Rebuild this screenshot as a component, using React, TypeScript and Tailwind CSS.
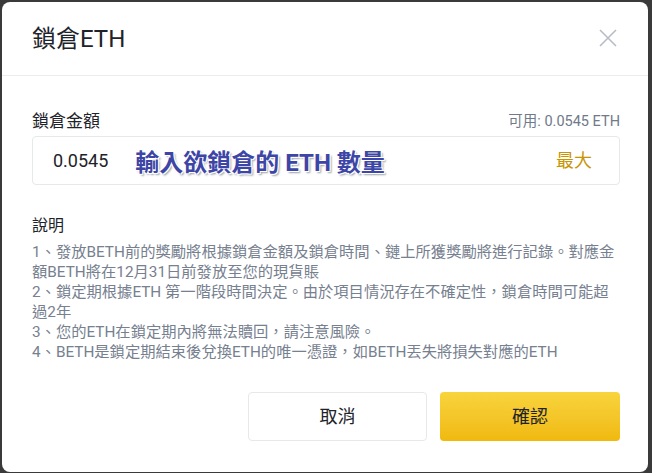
import React from "react";

export default function App() {
  const lines = [
    "1、發放BETH前的獎勵將根據鎖倉金額及鎖倉時間、鏈上所獲獎勵將進行記錄。對應金",
    "額BETH將在12月31日前發放至您的現貨賬",
    "2、鎖定期根據ETH 第一階段時間決定。由於項目情況存在不確定性，鎖倉時間可能超",
    "過2年",
    "3、您的ETH在鎖定期內將無法贖回，請注意風險。",
    "4、BETH是鎖定期結束後兌換ETH的唯一憑證，如BETH丟失將損失對應的ETH",
  ];
  return (
    <div className="w-[652px] h-[473px] bg-[#3a3a3a] pl-[2px] pt-[2px] pr-[4px] pb-[1px] font-['Roboto','Noto_Sans_CJK_TC',sans-serif]">
      <div className="h-full w-full bg-white rounded-[8px] flex flex-col">
        <div className="h-[74px] border-b border-[#eaecef] flex items-center justify-between pl-[30px] pr-[31px]">
          <div className="text-[24px] text-[#1e2329] leading-none">鎖倉ETH</div>
          <svg width="18" height="18" viewBox="0 0 18 18" className="mt-[-2px]">
            <path d="M1 1 L17 17 M17 1 L1 17" stroke="#b7bdc6" strokeWidth="1.6" fill="none" />
          </svg>
        </div>
        <div className="pl-[30px] pr-[28px] flex flex-col">
          <div className="mt-[34px] h-[24px] flex items-center justify-between">
            <span className="text-[17px] text-[#1e2329]">鎖倉金額</span>
            <span className="text-[14.5px] text-[#707a8a]">可用: 0.0545 ETH</span>
          </div>
          <div className="mt-[2px] h-[49px] border border-[#e6e8ea] rounded-[4px] flex items-center pl-[20px] pr-[27px]">
            <span className="text-[18px] text-[#1e2329]">0.0545</span>
            <span className="ml-[27px] text-[24px] font-bold text-[#3d45a6] leading-none mt-[4px] [text-shadow:1px_1px_0_#fff,-1px_-1px_0_#fff,1px_-1px_0_#fff,-1px_1px_0_#fff,2px_2px_2px_#9aa0a8]">
              輸入欲鎖倉的 ETH 數量
            </span>
            <span className="ml-auto text-[18px] text-[#c99400]">最大</span>
          </div>
          <div className="mt-[30px] h-[22px] flex items-center text-[16px] text-[#1e2329]">說明</div>
          <div className="mt-[5px] text-[15.3px] leading-[20px] text-[#76808f]">
            {lines.map((l, i) => (
              <div key={i} className="whitespace-nowrap">
                {l}
              </div>
            ))}
          </div>
          <div className="mt-[30px] flex justify-end gap-[13px]">
            <button className="w-[179px] h-[49px] border border-[#e6e8ea] rounded-[4px] bg-white text-[18px] text-[#1e2329]">
              取消
            </button>
            <button className="w-[180px] h-[49px] rounded-[4px] bg-gradient-to-b from-[#f8d43c] to-[#f0b90b] text-[18px] text-[#1e2329]">
              確認
            </button>
          </div>
        </div>
      </div>
    </div>
  );
}
